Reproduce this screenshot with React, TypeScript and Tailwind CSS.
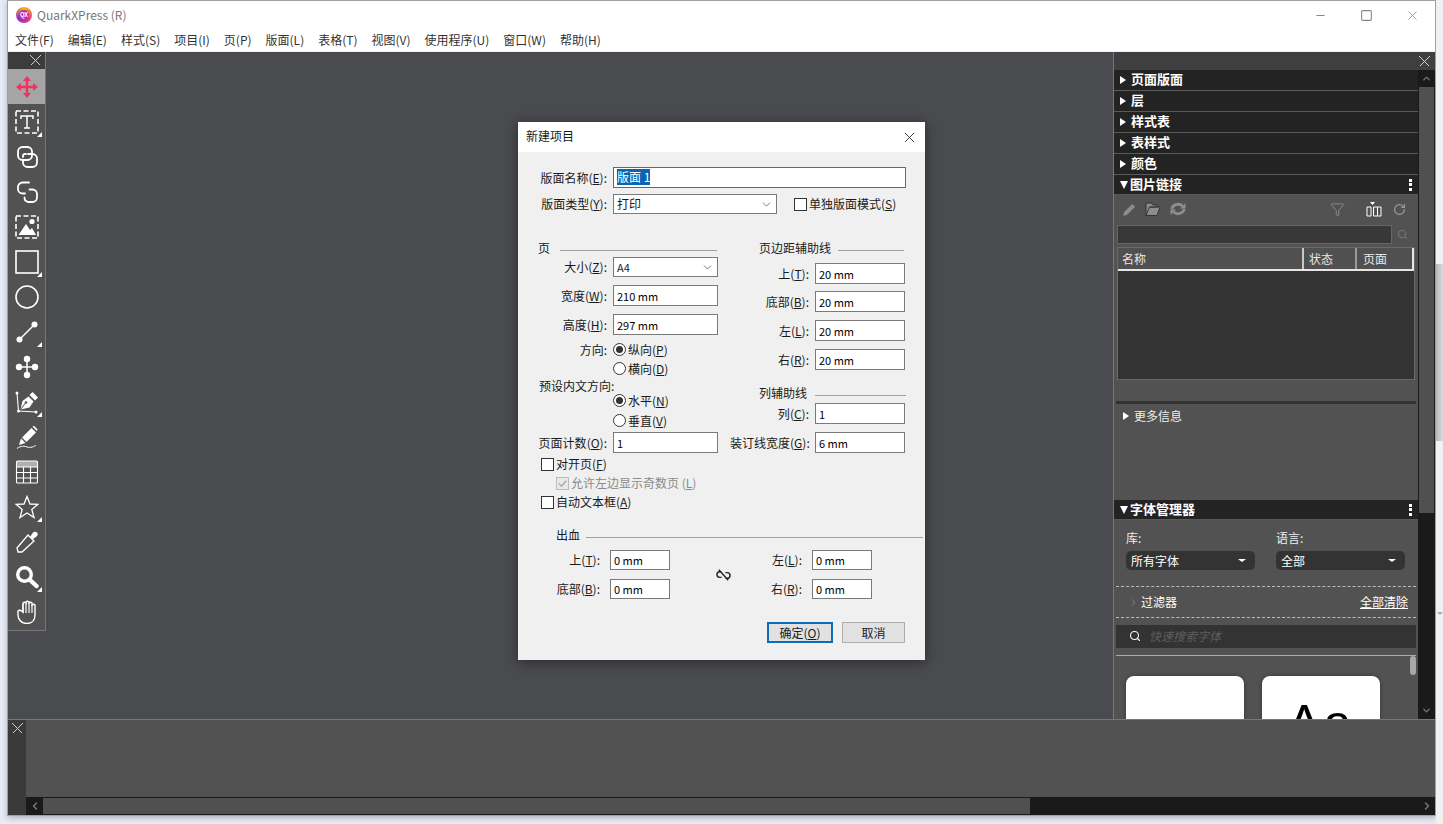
import { ReactNode } from 'react'
import { ChevronDown, ChevronLeft, ChevronRight, ChevronUp, X, Search, Minus, Square, RotateCw, Filter } from 'lucide-react'

const FONT = 'font-["Noto_Sans_CJK_SC","Noto_Sans",sans-serif]'

const MENUS = ['文件(F)', '编辑(E)', '样式(S)', '项目(I)', '页(P)', '版面(L)', '表格(T)', '视图(V)', '使用程序(U)', '窗口(W)', '帮助(H)']
const COLLAPSED = ['页面版面', '层', '样式表', '表样式', '颜色']

function PixelX({ className = '' }: { className?: string }) {
  return (
    <svg viewBox="0 0 11 11" className={`w-[11px] h-[11px] ${className}`} fill="none" stroke="#cfcfcf" strokeWidth="1.4" shapeRendering="crispEdges">
      <path d="M0.5 0.5 L10.5 10.5 M10.5 0.5 L0.5 10.5" />
    </svg>
  )
}

function Corner() {
  return <span className="absolute right-[3px] bottom-[2px] w-0 h-0 border-l-[5px] border-l-transparent border-b-[5px] border-b-white" />
}

function ToolIcon({ name }: { name: string }) {
  const s = { fill: 'none', stroke: 'white', strokeWidth: 1.6 }
  if (name === 'move')
    return (
      <svg viewBox="0 0 24 24" className="w-6 h-6" fill="#f0325f">
        <path d="M12 1 L16 6 H13.2 V10.8 H18 V8 L23 12 L18 16 V13.2 H13.2 V18 H16 L12 23 L8 18 H10.8 V13.2 H6 V16 L1 12 L6 8 V10.8 H10.8 V6 H8 Z" />
      </svg>
    )
  if (name === 'text')
    return (
      <svg viewBox="0 0 24 24" className="w-6 h-6">
        <rect x="1" y="1" width="22" height="22" {...s} strokeDasharray="5 2.5" />
        <path d="M6 9 V6 H18 V9 M12 6 V18 M9 18 H15" {...s} strokeWidth={1.5} />
      </svg>
    )
  if (name === 'link')
    return (
      <svg viewBox="0 0 24 24" className="w-6 h-6" {...s} strokeWidth={1.8} strokeLinecap="round">
        <rect x="3" y="2" width="14" height="13" rx="4.5" />
        <path d="M13 9 H17.5 A4.5 4.5 0 0 1 22 13.5 V17.5 A4.5 4.5 0 0 1 17.5 22 H12.5 A4.5 4.5 0 0 1 8 17.5 V15.5 M8 12 V11 A2 2 0 0 1 10 9 H11" />
      </svg>
    )
  if (name === 'unlink')
    return (
      <svg viewBox="0 0 24 24" className="w-6 h-6" {...s} strokeWidth={1.8} strokeLinecap="round">
        <path d="M14 2.5 H7.5 A4.5 4.5 0 0 0 3 7 V9 A4.5 4.5 0 0 0 7.5 13.5 H10" />
        <path d="M14.5 9.5 H17.5 A4.5 4.5 0 0 1 22 14 V17.5 A4.5 4.5 0 0 1 17.5 22 H13.5 A4.5 4.5 0 0 1 9.5 17.5" />
      </svg>
    )
  if (name === 'image')
    return (
      <svg viewBox="0 0 24 24" className="w-6 h-6">
        <rect x="1" y="1" width="22" height="22" {...s} strokeDasharray="5 2.5" />
        <circle cx="17" cy="6.5" r="2.6" fill="white" />
        <path d="M3.5 20 L11 9 L15 15 L17 13 L21 20 Z" fill="white" />
      </svg>
    )
  if (name === 'rect')
    return (
      <svg viewBox="0 0 24 24" className="w-6 h-6">
        <rect x="1" y="1" width="22" height="22" {...s} />
      </svg>
    )
  if (name === 'circle')
    return (
      <svg viewBox="0 0 24 24" className="w-6 h-6">
        <circle cx="12" cy="12" r="11" {...s} />
      </svg>
    )
  if (name === 'line')
    return (
      <svg viewBox="0 0 24 24" className="w-6 h-6" fill="white">
        <path d="M5 19 L19 5" stroke="white" strokeWidth="1.5" />
        <circle cx="4.5" cy="19.5" r="3" />
        <circle cx="19.5" cy="4.5" r="3" />
      </svg>
    )
  if (name === 'nodes')
    return (
      <svg viewBox="0 0 24 24" className="w-6 h-6" fill="white">
        <path d="M12 4 V20 M4 12 H20" stroke="white" strokeWidth="1.5" />
        <circle cx="12" cy="4" r="3.2" />
        <circle cx="12" cy="20" r="3.2" />
        <circle cx="4" cy="12" r="3.2" />
        <circle cx="20" cy="12" r="3.2" />
      </svg>
    )
  if (name === 'pen')
    return (
      <svg viewBox="0 0 24 24" className="w-6 h-6">
        <path d="M2 3 L3.5 21 L21 22" {...s} strokeWidth={1.1} />
        <path d="M7.5 11 L13.5 6.5 L18.5 11.5 L14.5 17.5 L5.5 19.5 Z" fill="white" />
        <path d="M5.5 19.5 L10.5 13" stroke="#525252" strokeWidth="1" />
        <circle cx="11" cy="12.5" r="1.3" fill="#525252" />
        <path d="M14.5 5 L17.5 2 L23 7.5 L20 10.5 Z" fill="white" />
        <circle cx="2" cy="3" r="1.5" fill="white" />
        <circle cx="3.5" cy="21" r="1.5" fill="white" />
        <circle cx="21" cy="22" r="1.5" fill="white" />
      </svg>
    )
  if (name === 'pencil')
    return (
      <svg viewBox="0 0 24 24" className="w-6 h-6">
        <path d="M7 12.5 L16.5 3 L21 7.5 L11.5 17 Z" fill="white" />
        <path d="M17.5 1.8 L19 0.8 L22.5 4.3 L21.8 6 Z" fill="white" />
        <path d="M6 13.5 L10.5 18 L4 20 Z" fill="white" />
        <path d="M2 23.5 C6 20.5 10 21 12 22 C15 23.2 20 21.5 21 20" {...s} strokeWidth={1} />
      </svg>
    )
  if (name === 'table')
    return (
      <svg viewBox="0 0 24 24" className="w-6 h-6">
        <rect x="2" y="1" width="20" height="6" fill="#b0b0b0" />
        <rect x="1.5" y="1" width="21" height="22" rx="1" {...s} strokeWidth={1.1} />
        <path d="M1.5 7 H22.5 M1.5 12.5 H22.5 M1.5 18 H22.5 M8.5 7 V23 M15.5 7 V23" {...s} strokeWidth={1.1} />
      </svg>
    )
  if (name === 'star')
    return (
      <svg viewBox="0 0 24 24" className="w-6 h-6">
        <path d="M12 1.5 L15 9 L23 9.3 L16.8 14.4 L19 22.5 L12 18 L5 22.5 L7.2 14.4 L1 9.3 L9 9 Z" {...s} strokeWidth={1.3} />
      </svg>
    )
  if (name === 'dropper')
    return (
      <svg viewBox="0 0 24 24" className="w-6 h-6">
        <path d="M13 5 L19 11 L7 22 L3 22 L2 18 Z" {...s} strokeWidth={1.3} />
        <path d="M12 4.5 L15 7 L18 2.5 Q20.5 0.8 22.5 3 Q23.5 5 21.5 6.5 L17.5 9.5 L19.5 12 Z" fill="white" />
      </svg>
    )
  if (name === 'zoom')
    return (
      <svg viewBox="0 0 24 24" className="w-6 h-6" fill="none" stroke="white" strokeLinecap="round">
        <circle cx="9.5" cy="9.5" r="6.8" strokeWidth="3.4" />
        <path d="M15 15 L21.5 21" strokeWidth="4.4" />
      </svg>
    )
  return (
    <svg viewBox="0 0 24 24" className="w-6 h-6">
      <path d="M3 11 V15 C3 20 7 23.5 12 23.5 C17 23.5 20 20 20 15 V5 Q18.5 3.5 17 5 V3 Q15.5 1.5 14 3 V2 Q12.5 0.5 11 2 V3 Q9.5 1.5 8 3 V12 Q5 9 3 11 Z" {...s} strokeWidth={1.4} />
      <path d="M8 4 V13 M11 3 V13 M14 3 V13 M17 5 V13" {...s} strokeWidth={1.2} />
    </svg>
  )
}

const TOOLS: { name: string; corner?: boolean }[] = [
  { name: 'move' },
  { name: 'text', corner: true },
  { name: 'link' },
  { name: 'unlink' },
  { name: 'image' },
  { name: 'rect', corner: true },
  { name: 'circle' },
  { name: 'line', corner: true },
  { name: 'nodes' },
  { name: 'pen', corner: true },
  { name: 'pencil' },
  { name: 'table' },
  { name: 'star', corner: true },
  { name: 'dropper' },
  { name: 'zoom', corner: true },
  { name: 'hand' },
]

function Toolbar() {
  return (
    <div className="w-[38px] h-[579px] shrink-0 bg-[#525252] border-r border-b border-[#777] flex flex-col">
      <div className="h-[17px] bg-[#3c3c3c] flex items-center justify-end pr-[4px]">
        <PixelX />
      </div>
      {TOOLS.map((t, i) => (
        <div key={t.name} className={`relative h-[35px] flex items-center justify-center ${i === 0 ? 'bg-[#a5a5a5]' : ''}`}>
          <ToolIcon name={t.name} />
          {t.corner && <Corner />}
        </div>
      ))}
    </div>
  )
}

// label with an underlined access key, e.g. 版面名称(E):
function Key({ t, k, colon = ':' }: { t: string; k: string; colon?: string }) {
  return (
    <span className="whitespace-nowrap">
      {t}(<span className="underline">{k}</span>){colon}
    </span>
  )
}

function Input({ value, w, h = 21 }: { value: string; w: number; h?: number }) {
  return (
    <div style={{ width: w, height: h }} className="bg-white border border-[#7a7a7a] pl-[3px] flex items-center text-black text-[11px]">
      {value}
    </div>
  )
}

function Row({ label, k, value, labelW, w, h, mt, pr = 6 }: { label: string; k: string; value: string; labelW: number; w: number; h?: number; mt?: number; pr?: number }) {
  return (
    <div style={{ marginTop: mt ?? 0 }} className="flex items-center">
      <div style={{ width: labelW, paddingRight: pr }} className="text-right whitespace-nowrap">
        <Key t={label} k={k} />
      </div>
      <Input value={value} w={w} h={h} />
    </div>
  )
}

function SectionTitle({ title, lineW, gap }: { title: string; lineW: number; gap: number }) {
  return (
    <div className="flex items-center h-[18px]">
      <span className="whitespace-nowrap">{title}</span>
      <div style={{ width: lineW, marginLeft: gap }} className="h-px bg-[#a0a0a0] mt-[4px]" />
    </div>
  )
}

function Radio({ on, children }: { on?: boolean; children: ReactNode }) {
  return (
    <div className="flex items-center h-[19px]">
      <span className="w-[13px] h-[13px] rounded-full border border-[#333] bg-white flex items-center justify-center mr-[2px]">
        {on && <span className="w-[7px] h-[7px] rounded-full bg-[#333]" />}
      </span>
      {children}
    </div>
  )
}

function Check({ children, mt = 0, disabled }: { children: ReactNode; mt?: number; disabled?: boolean }) {
  return (
    <div style={{ marginTop: mt }} className={`flex items-center h-[16px] ${disabled ? 'text-[#8a8a8a]' : ''}`}>
      <span className={`w-[13px] h-[13px] border flex items-center justify-center mr-[2px] ${disabled ? 'border-[#bbb] bg-[#e8e8e8]' : 'border-[#333] bg-white'}`}>
        {disabled && (
          <svg viewBox="0 0 12 12" className="w-[11px] h-[11px]" fill="none" stroke="#aaa" strokeWidth="1.4">
            <path d="M2 6 L5 9 L10 3" />
          </svg>
        )}
      </span>
      {children}
    </div>
  )
}

function Dialog() {
  return (
    <div className="absolute left-[518px] top-[122px] w-[407px] h-[538px] bg-[#f0f0f0] shadow-[0_2px_12px_rgba(0,0,0,0.45)] text-[12px] leading-[16px] text-[#1a1a1a] flex flex-col">
      <div className="h-[30px] shrink-0 bg-white flex items-center justify-between pl-[8px] pr-[7px]">
        <span className="pb-[2px]">新建项目</span>
        <X className="w-[17px] h-[17px] text-[#222]" strokeWidth={1.2} />
      </div>

      <div className="flex items-center mt-[15px]">
        <div className="w-[95px] text-right pr-[6px]"><Key t="版面名称" k="E" /></div>
        <div className="w-[293px] h-[21px] bg-white border border-[#1f7fb0] flex items-center pl-[3px] pb-[2px]">
          <span className="bg-[#0a64b4] text-white">版面 1</span>
        </div>
      </div>
      <div className="flex items-center mt-[6px]">
        <div className="w-[95px] text-right pr-[6px]"><Key t="版面类型" k="Y" /></div>
        <div className="w-[164px] h-[20px] bg-white border border-[#7a7a7a] flex items-center justify-between pl-[3px] pr-[3px]">
          <span>打印</span>
          <ChevronDown className="w-[13px] h-[13px] text-[#444]" strokeWidth={1.3} />
        </div>
        <div className="ml-[17px]">
          <Check>单独版面模式(<span className="underline">S</span>)</Check>
        </div>
      </div>

      <div className="flex mt-[25px]">
        {/* left column */}
        <div className="w-[200px] ml-[20px] shrink-0">
          <SectionTitle title="页" lineW={157} gap={10} />
          <div className="flex items-center">
            <div className="w-[75px] text-right pr-[6px]"><Key t="大小" k="Z" /></div>
            <div className="w-[105px] h-[20px] bg-white border border-[#7a7a7a] flex items-center justify-between pl-[3px] pr-[3px] text-[11px]">
              <span>A4</span>
              <ChevronDown className="w-[13px] h-[13px] text-[#444]" strokeWidth={1.3} />
            </div>
          </div>
          <Row label="宽度" k="W" value="210 mm" labelW={75} w={105} mt={8} h={21} />
          <Row label="高度" k="H" value="297 mm" labelW={75} w={105} mt={8} h={21} />
          <div className="flex mt-[5px]">
            <div className="w-[75px] text-right pr-[6px] leading-[19px]">方向:</div>
            <div>
              <Radio on>纵向(<span className="underline">P</span>)</Radio>
              <Radio>横向(<span className="underline">D</span>)</Radio>
            </div>
          </div>
          <div className="ml-[1px] h-[13px] leading-[15px]">预设内文方向:</div>
          <div className="ml-[75px]">
            <Radio on>水平(<span className="underline">N</span>)</Radio>
            <div className="mt-[1px]">
              <Radio>垂直(<span className="underline">V</span>)</Radio>
            </div>
          </div>
          <Row label="页面计数" k="O" value="1" labelW={75} w={105} mt={2} h={21} />
          <div className="ml-[3px] mt-[3px]">
            <Check mt={1}>对开页(<span className="underline">F</span>)</Check>
            <div className="ml-[15px]">
              <Check mt={3} disabled>
                允许左边显示奇数页 (<span className="underline">L</span>)
              </Check>
            </div>
            <Check mt={3}>自动文本框(<span className="underline">A</span>)</Check>
          </div>
        </div>

        {/* right column */}
        <div className="ml-[-8px] w-[180px] shrink-0">
          <div className="ml-[29px]">
            <SectionTitle title="页边距辅助线" lineW={66} gap={7} />
          </div>
          <Row label="上" k="T" value="20 mm" labelW={85} w={90} mt={6} h={21} />
          <Row label="底部" k="B" value="20 mm" labelW={85} w={90} mt={7} h={21} />
          <Row label="左" k="L" value="20 mm" labelW={85} w={90} mt={8} h={21} />
          <Row label="右" k="R" value="20 mm" labelW={85} w={90} mt={8} h={21} />
          <div className="ml-[29px] mt-[14px]">
            <SectionTitle title="列辅助线" lineW={91} gap={8} />
          </div>
          <Row label="列" k="C" value="1" labelW={85} w={90} mt={1} h={21} />
          <Row label="装订线宽度" k="G" value="6 mm" labelW={85} w={90} mt={8} h={21} />
        </div>
      </div>

      <div className="ml-[38px] mt-[16px]">
        <SectionTitle title="出血" lineW={337} gap={6} />
      </div>
      <div className="flex mt-[6px]">
        <div className="w-[152px]">
          <Row label="上" k="T" value="0 mm" labelW={92} w={60} h={20} pr={10} />
          <Row label="底部" k="B" value="0 mm" labelW={92} w={60} h={20} mt={9} pr={10} />
        </div>
        <div className="w-[89px] flex items-center pl-[46px]">
          <svg viewBox="0 0 16 12" className="w-[15px] h-[12px] shrink-0" fill="none" stroke="#222" strokeWidth="1.5">
            <path d="M6 2.5 H4 A3 3 0 0 0 4 8.5 H6 M10 3.5 H12 A3 3 0 0 1 12 9.5 H10 M3 0.5 L13 11.5" />
          </svg>
        </div>
        <div>
          <Row label="左" k="L" value="0 mm" labelW={53} w={60} h={20} pr={10} />
          <Row label="右" k="R" value="0 mm" labelW={53} w={60} h={20} mt={9} pr={10} />
        </div>
      </div>

      <div className="flex mt-[23px] ml-[249px] gap-[9px]">
        <div className="w-[66px] h-[21px] bg-[#e1e1e1] border-2 border-[#0f6cb4] flex items-center justify-center">
          确定(<span className="underline">O</span>)
        </div>
        <div className="w-[63px] h-[21px] bg-[#e1e1e1] border border-[#adadad] flex items-center justify-center">取消</div>
      </div>
    </div>
  )
}

function PanelHeader({ title, open, menu, h = 21 }: { title: string; open?: boolean; menu?: boolean; h?: number }) {
  return (
    <div style={{ height: h }} className="shrink-0 bg-[#232323] border-b border-[#5a5a5a] flex items-center pl-[6px] pr-[6px] text-white font-bold text-[13px]">
      <span className={open ? 'w-0 h-0 border-x-[4px] border-x-transparent border-t-[8px] border-t-white mr-[2px]' : 'w-0 h-0 border-y-[4px] border-y-transparent border-l-[6px] border-l-white mr-[5px]'} />
      <span className="flex-1 pb-[2px]">{title}</span>
      {menu && (
        <span className="flex flex-col gap-[1.5px]">
          <span className="w-[3px] h-[3px] bg-white" />
          <span className="w-[3px] h-[3px] bg-white" />
          <span className="w-[3px] h-[3px] bg-white" />
        </span>
      )}
    </div>
  )
}

function LinkTools() {
  return (
    <div className="h-[30px] flex items-center pl-[8px] pr-[12px] pb-[2px] shrink-0">
      <svg viewBox="0 0 16 16" className="w-[15px] h-[15px]" fill="#8d8d8d">
        <path d="M1 15 L2.5 10.5 L11 2 L14 5 L5.5 13.5 Z" />
      </svg>
      <svg viewBox="0 0 16 16" className="w-[16px] h-[16px] ml-[8px]" fill="#8d8d8d" stroke="#2e2e2e" strokeWidth="0.9">
        <path d="M1 14.5 V2 H6 L8 4 H12 V6 H4.5 L1 14.5 H12 L15 6 H4.5" />
      </svg>
      <svg viewBox="0 0 16 16" className="w-[16px] h-[16px] ml-[9px]" fill="none" stroke="#8d8d8d" strokeWidth="2.8">
        <path d="M2 8 A6 5 0 0 1 12.5 5 M14 8 A6 5 0 0 1 3.5 11" />
        <path d="M10 7.5 H15.5 V2 Z M6 8.5 H0.5 V14 Z" fill="#8d8d8d" stroke="none" />
      </svg>
      <div className="flex-1" />
      <Filter className="w-[15px] h-[15px] text-[#9a9a9a]" strokeWidth={1.2} />
      <svg viewBox="0 0 16 16" className="w-[17px] h-[16px] ml-[20px]" fill="none" stroke="white" strokeWidth="1">
        <path d="M1.5 6 H5.5 V15 H1.5 Z M8 6 H12 V15 H8 Z M12 6 H15.5 V15 H12 Z" />
        <path d="M4.5 1 H9.5 L7 4 Z" fill="white" stroke="none" />
      </svg>
      <RotateCw className="w-[13px] h-[13px] ml-[11px] text-[#9a9a9a]" strokeWidth={2.2} />
    </div>
  )
}

function LinkTable() {
  return (
    <div className="mx-[3px] mt-[3px] h-[133px] bg-[#333] border border-[#6a6a6a] flex flex-col shrink-0">
      <div className="h-[23px] bg-[#505050] border-b-2 border-[#e6e6e6] flex text-[#e8e8e8] text-[12px]">
        <div className="w-[186px] pl-[4px] border-r-2 border-[#c8c8c8] flex items-center">名称</div>
        <div className="w-[53px] pl-[5px] border-r-2 border-[#9a9a9a] flex items-center">状态</div>
        <div className="flex-1 pl-[6px] border-r-2 border-[#e6e6e6] flex items-center">页面</div>
      </div>
    </div>
  )
}

function FontCard({ children }: { children?: ReactNode }) {
  return (
    <div className="w-[118px] h-[70px] bg-white rounded-t-[8px] text-black text-[50px] leading-[60px] tracking-[3px] font-['Liberation_Sans',sans-serif] text-center pt-[17px] overflow-hidden shadow-[0_0_4px_rgba(0,0,0,0.35)]">
      {children}
    </div>
  )
}

function FontSelect({ label }: { label: string }) {
  return (
    <div className="w-[129px] h-[19px] bg-[#333] rounded-[5px] flex items-center justify-between pl-[5px] pr-[9px] text-white">
      {label}
      <span className="w-0 h-0 border-x-[4px] border-x-transparent border-t-[3px] border-t-white" />
    </div>
  )
}

function RightPanel() {
  return (
    <div className="w-[322px] shrink-0 border-l border-[#777] flex flex-col h-[667px] overflow-hidden">
      <div className="h-[18px] bg-[#3f3f3f] flex items-center justify-end pr-[5px] shrink-0">
        <PixelX />
      </div>
      <div className="flex flex-1 min-h-0">
        <div className="w-[304px] bg-[#525252] flex flex-col text-[12px] leading-[16px] overflow-hidden">
          {COLLAPSED.map(t => (
            <PanelHeader key={t} title={t} />
          ))}
          <PanelHeader title="图片链接" open menu h={20} />
          <LinkTools />
          <div className="flex items-center pl-[3px] shrink-0">
            <div className="w-[275px] h-[19px] bg-[#383838] border border-[#666]" />
            <Search className="w-[11px] h-[11px] ml-[5px] text-[#7c7c7c]" strokeWidth={2} />
          </div>
          <LinkTable />
          <div className="mx-[2px] mt-[21px] h-[3px] bg-[#333] shrink-0" />
          <div className="flex items-center pl-[9px] mt-[3px] h-[18px] text-[#eee] shrink-0">
            <span className="w-0 h-0 border-y-[4px] border-y-transparent border-l-[6px] border-l-white mr-[5px]" />
            更多信息
          </div>
          <div className="mt-[75px]">
            <PanelHeader title="字体管理器" open menu h={20} />
          </div>
          <div className="flex gap-[21px] pl-[12px] mt-[10px] shrink-0 text-[#eee]">
            <div>
              <div className="h-[16px]">库:</div>
              <div className="mt-[5px]"><FontSelect label="所有字体" /></div>
            </div>
            <div>
              <div className="h-[16px]">语言:</div>
              <div className="mt-[5px]"><FontSelect label="全部" /></div>
            </div>
          </div>
          <div className="mx-[2px] mt-[16px] border-t border-dashed border-[#bbb] shrink-0" />
          <div className="flex items-center justify-between h-[30px] pl-[14px] pr-[10px] text-white shrink-0">
            <span className="flex items-center gap-[2px]">
              <ChevronRight className="w-[11px] h-[11px] text-[#999]" strokeWidth={1.5} />
              过滤器
            </span>
            <span className="underline">全部清除</span>
          </div>
          <div className="mx-[2px] border-t border-dashed border-[#bbb] shrink-0" />
          <div className="mx-[2px] mt-[7px] h-[23px] bg-[#333] flex items-center pl-[13px] pb-[1px] gap-[8px] text-[#5e5e5e] italic shrink-0">
            <Search className="w-[12px] h-[12px] text-white not-italic" strokeWidth={2.2} />
            快速搜索字体
          </div>
          <div className="mx-[2px] mt-[7px] h-px bg-[#aaa] shrink-0" />
          <div className="relative flex gap-[18px] pl-[12px] pt-[20px]">
            <span className="absolute right-[2px] top-0 w-[6px] h-[19px] bg-[#a8a8a8] rounded-[3px]" />
            <FontCard />
            <FontCard>Aa</FontCard>
          </div>
        </div>
        <div className="flex-1 flex flex-col bg-[#1a1a1a]">
          <div className="h-[17px] flex items-center justify-center shrink-0">
            <ChevronUp className="w-[11px] h-[11px] text-[#777]" strokeWidth={3} />
          </div>
          <div className="h-[426px] bg-[#505050] mx-px shrink-0" />
          <div className="flex-1" />
          <div className="h-[17px] flex items-center justify-center shrink-0">
            <ChevronDown className="w-[11px] h-[11px] text-[#777]" strokeWidth={3} />
          </div>
        </div>
      </div>
    </div>
  )
}

function BottomPanel() {
  return (
    <div className="h-[96px] shrink-0 flex border-t border-[#777] bg-[#525252]">
      <div className="w-[18px] bg-[#3a3a3a] flex justify-center pt-[3px] shrink-0">
        <PixelX />
      </div>
      <div className="flex-1 flex flex-col">
        <div className="flex-1" />
        <div className="h-[18px] flex items-stretch bg-[#1a1a1a] py-px">
          <div className="w-[17px] flex items-center justify-center">
            <ChevronLeft className="w-[12px] h-[12px] text-[#777]" strokeWidth={3} />
          </div>
          <div className="w-[987px] bg-[#505050]" />
          <div className="flex-1" />
          <div className="w-[17px] flex items-center justify-center">
            <ChevronRight className="w-[12px] h-[12px] text-[#777]" strokeWidth={3} />
          </div>
        </div>
      </div>
    </div>
  )
}

export default function App() {
  return (
    <div className={`relative w-[1443px] h-[824px] overflow-hidden bg-[#e9ecf6] flex items-start ${FONT}`}>
      <div className="w-[7px] shrink-0" />
      <div className="w-[1429px] h-[816px] shrink-0 border border-[#a0a0a0] bg-white flex flex-col shadow-[0_2px_6px_rgba(0,0,0,0.25)]">
        <div className="h-[28px] shrink-0 flex items-center pl-[8px] text-[12px] text-[#777]">
          <span className="w-[16px] h-[16px] rounded-full bg-[conic-gradient(#f5b60d,#f23a6f,#8b2fd0,#f5b60d)] flex items-center justify-center mr-[5px]">
            <span className="w-[10px] h-[10px] rounded-full bg-[#b52bb0] text-white text-[6px] leading-[10px] text-center font-bold">QX</span>
          </span>
          QuarkXPress (R)
          <div className="flex-1" />
          <Minus className="w-[13px] h-[13px] text-[#888] mr-[33px]" strokeWidth={2} />
          <Square className="w-[13px] h-[13px] text-[#888] mr-[32px]" strokeWidth={2} />
          <X className="w-[15px] h-[15px] text-[#888] mr-[15px]" strokeWidth={1.2} />
        </div>
        <div className="h-[22px] shrink-0 flex items-center pl-[7px] pb-[1px] gap-[14px] text-[12px] text-[#333]">
          {MENUS.map(m => (
            <span key={m}>{m}</span>
          ))}
        </div>
        <div className="flex-1 min-h-0 flex bg-[#4a4b4f] border-t border-[#f0f0f0]">
          <Toolbar />
          <div className="flex-1" />
          <RightPanel />
        </div>
        <BottomPanel />
      </div>
      <div className="flex-1 h-full bg-[#f1f1f1] flex flex-col">
        <div className="h-[264px] shrink-0" />
        <div className="h-[177px] shrink-0 bg-gradient-to-r from-[#b5b5b5] to-[#dcdcdc]" />
        <div className="h-[171px] shrink-0" />
        <span className="w-0 h-0 ml-[1px] border-x-[3px] border-x-transparent border-t-[3px] border-t-[#aaa]" />
      </div>
      <Dialog />
    </div>
  )
}
